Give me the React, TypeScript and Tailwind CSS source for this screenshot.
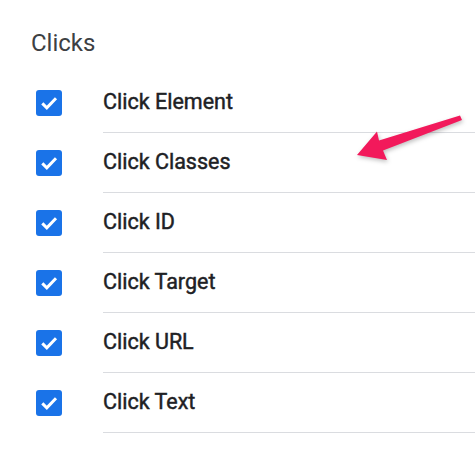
import React from 'react'

const items = ['Click Element', 'Click Classes', 'Click ID', 'Click Target', 'Click URL', 'Click Text']

function CheckBox() {
  return (
    <span className="flex-shrink-0 w-[26px] h-[26px] rounded-[3px] bg-[#1a73e8] flex items-center justify-center">
      <svg width="26" height="26" viewBox="0 0 26 26">
        <polyline points="6.3,13.4 10.8,17.8 20,8.3" fill="none" stroke="#fff" strokeWidth="3" />
      </svg>
    </span>
  )
}

export default function App() {
  return (
    <div className="relative w-[475px] h-[462px] bg-white overflow-hidden font-['Roboto',sans-serif]">
      <h2 className="pl-[31px] pt-[29px] h-[57px] text-[24px] leading-[28px] font-normal text-[#3c4043]">Clicks</h2>
      <div className="mt-[16px]">
        {items.map(name => (
          <div key={name} className="flex items-center h-[60px]">
            <div className="w-[103px] pl-[36px] flex items-center">
              <CheckBox />
            </div>
            <div className="flex-1 h-full flex items-center border-b border-[#dadce0] text-[21.5px] font-normal text-[#202124] [-webkit-text-stroke:0.45px_#202124]">
              {name}
            </div>
          </div>
        ))}
      </div>
      <svg
        className="absolute left-0 top-0 pointer-events-none"
        width="475"
        height="462"
        style={{ filter: 'drop-shadow(1px 2px 2px rgba(0,0,0,0.25))' }}
      >
        <polygon
          points="357,155 377,131.5 379,140.5 460,115.5 462,120 383,150.5 387,160"
          fill="#f2195b"
        />
      </svg>
    </div>
  )
}
